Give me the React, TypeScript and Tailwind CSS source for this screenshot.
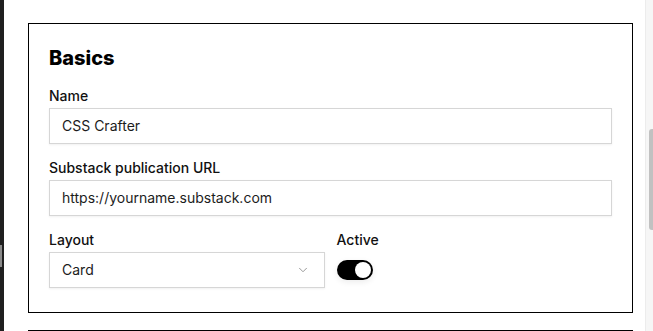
import { ChevronDown } from 'lucide-react';

function Field({ label, value, className = '' }: { label: string; value: string; className?: string }) {
  return (
    <div className={className}>
      <div className="text-sm leading-5 font-medium text-[#111] mb-[2px]">{label}</div>
      <div className="h-9 border border-[#d6d6d6] shadow-[0_1px_2px_rgba(0,0,0,0.06)] bg-white flex items-center px-3 text-sm text-[#1c1c1c]">
        {value}
      </div>
    </div>
  );
}

export default function App() {
  return (
    <div className="flex h-[331px] w-[653px] overflow-hidden bg-white" style={{ fontFamily: 'Inter, "Noto Sans", sans-serif' }}>
      {/* left window edge */}
      <div className="w-[4px] bg-[#1f1f1f] flex flex-col shrink-0">
        <div className="h-[245px]" />
        <div className="h-[22px] w-[2px] bg-[#8a8a8a]" />
      </div>

      <div className="flex-1 pl-[24px] pt-[23px] flex flex-col gap-[17px]">
        <div className="w-[605px] border border-black px-5 pt-5 pb-6 shrink-0">
          <h2 className="text-xl leading-7 font-extrabold text-black mb-[14px]">Basics</h2>

          <Field label="Name" value="CSS Crafter" />
          <Field label="Substack publication URL" value="https://yourname.substack.com" className="mt-[14px]" />

          <div className="grid grid-cols-2 gap-3 mt-[14px]">
            <div>
              <div className="text-sm leading-5 font-medium text-[#111] mb-[2px]">Layout</div>
              <div className="h-9 border border-[#d6d6d6] shadow-[0_1px_2px_rgba(0,0,0,0.06)] bg-white flex items-center justify-between pl-3 pr-[14px] text-sm text-[#1c1c1c]">
                <span>Card</span>
                <ChevronDown size={14} strokeWidth={1.5} className="text-[#8a8a8a]" />
              </div>
            </div>
            <div>
              <div className="text-sm leading-5 font-medium text-[#111] mb-[2px]">Active</div>
              <div className="h-9 flex items-center">
                <div className="w-9 h-5 rounded-full bg-black flex items-center justify-end pr-[2px] shadow-[0_2px_6px_rgba(0,0,0,0.08)]">
                  <div className="w-4 h-4 rounded-full bg-white" />
                </div>
              </div>
            </div>
          </div>
        </div>

        <div className="w-[605px] h-[40px] border border-black shrink-0" />
      </div>

      {/* scrollbar */}
      <div className="w-[8px] bg-[#f6f6f6] border-l border-[#ececec] shrink-0 flex flex-col items-end">
        <div className="h-[129px]" />
        <div className="w-[4px] h-[101px] bg-[#c1c1c1] rounded-tl-[3px] rounded-bl-[3px]" />
      </div>
    </div>
  );
}
